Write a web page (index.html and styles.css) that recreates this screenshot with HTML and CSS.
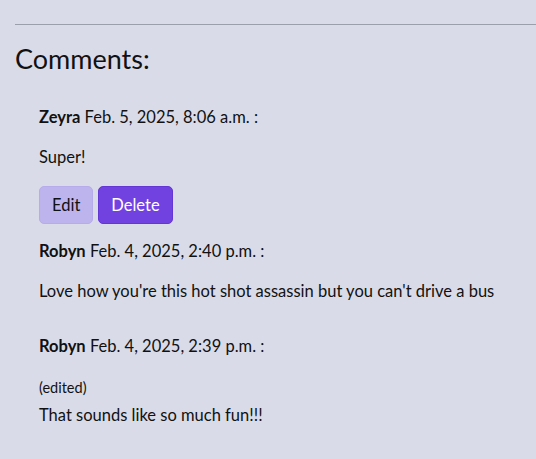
FILE: index.html
```html
<!DOCTYPE html>
<html lang="en">
<head>
<meta charset="utf-8">
<link rel="stylesheet" href="styles.css">
<title>Comments</title>
</head>
<body>
<hr class="rule">
<h2 class="title">Comments:</h2>
<div class="comments">
  <div class="comment">
    <p class="meta"><strong>Zeyra</strong> Feb. 5, 2025, 8:06 a.m. :</p>
    <p class="body">Super!</p>
    <div class="actions">
      <button class="btn btn-edit">Edit</button>
      <button class="btn btn-delete">Delete</button>
    </div>
  </div>
  <div class="comment">
    <p class="meta"><strong>Robyn</strong> Feb. 4, 2025, 2:40 p.m. :</p>
    <p class="body">Love how you're this hot shot assassin but you can't drive a bus</p>
  </div>
  <div class="comment comment-gap">
    <p class="meta"><strong>Robyn</strong> Feb. 4, 2025, 2:39 p.m. :</p>
    <p class="edited">(edited)</p>
    <p class="body body-tight">That sounds like so much fun!!!</p>
  </div>
</div>
</body>
</html>
```
FILE: styles.css
```css
html, body {
  margin: 0;
  background: #d9dce8;
}
body {
  padding: 0 0 0 15px;
  font-family: "Lato", "Open Sans", sans-serif;
  color: #111;
  overflow: hidden;
}
.rule {
  margin: 24px 0 0 0;
  border: 0;
  border-top: 1px solid #9b9eab;
  height: 0;
}
.title {
  font-weight: 400;
  font-size: 27px;
  line-height: 34px;
  margin: 17px 0 0 0;
}
.comments {
  padding-left: 24px;
  margin-top: 29px;
}
.comment p {
  margin: 0;
  font-size: 16.5px;
  line-height: 24px;
}
.meta strong {
  font-weight: 700;
}
.comment .body {
  margin-top: 16px;
}
.actions {
  display: flex;
  gap: 5px;
  margin-top: 17px;
}
.btn {
  font-family: inherit;
  font-size: 16.5px;
  height: 38px;
  padding: 0 12px;
  border-radius: 5px;
  cursor: pointer;
}
.btn-edit {
  background: #bdb4ee;
  border: 1px solid #b6acea;
  color: #111;
}
.btn-delete {
  background: #7242e0;
  border: 1px solid #6536d6;
  color: #fff;
}
.comment + .comment {
  margin-top: 15px;
}
.comment.comment-gap {
  margin-top: 31px;
}
.comment .edited {
  font-size: 14.5px;
  line-height: 18px;
  margin-top: 21px;
}
.comment .body-tight {
  margin-top: 6px;
}
```
